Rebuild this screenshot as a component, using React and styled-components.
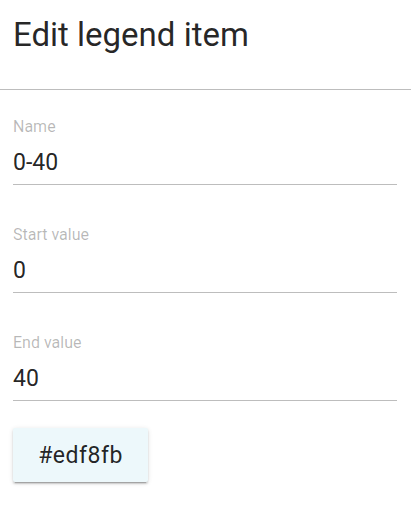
import React from "react";
import styled, { createGlobalStyle } from "styled-components";

const GlobalStyle = createGlobalStyle`
  body {
    margin: 0;
    background: #fff;
    font-family: Roboto, "Liberation Sans", sans-serif;
  }
`;

const Page = styled.div`
  width: 411px;
  height: 505px;
  overflow: hidden;
  background: #fff;
`;

const Header = styled.div`
  padding: 14px 13px 33px;
  border-bottom: 1px solid #bdbdbd;
`;

const Title = styled.h2`
  margin: 0;
  font-size: 33px;
  line-height: 42px;
  font-weight: 400;
  color: rgba(0, 0, 0, 0.85);
`;

const Body = styled.div`
  padding: 29px 14px 0 13px;
  display: flex;
  flex-direction: column;
`;

const Field = styled.div`
  display: flex;
  flex-direction: column;
  margin-bottom: ${(p) => (p.last ? "27px" : "42px")};
`;

const Label = styled.label`
  font-size: 16px;
  line-height: 16px;
  color: rgba(0, 0, 0, 0.28);
`;

const Value = styled.div`
  margin-top: 14px;
  height: 28px;
  padding-bottom: 7px;
  font-size: 23px;
  line-height: 28px;
  color: rgba(0, 0, 0, 0.87);
  border-bottom: 1px solid #bdbdbd;
`;

const ColorButton = styled.button`
  width: 135px;
  height: 54px;
  padding: 0;
  border: none;
  border-radius: 2px;
  background: ${(p) => p.color};
  box-shadow: 0 3px 1px -2px rgba(0, 0, 0, 0.2), 0 2px 2px 0 rgba(0, 0, 0, 0.14),
    0 1px 5px 0 rgba(0, 0, 0, 0.12);
  font-family: Roboto, "Liberation Sans", sans-serif;
  font-size: 23px;
  letter-spacing: 0.5px;
  color: rgba(0, 0, 0, 0.87);
  cursor: pointer;
`;

const fields = [
  { label: "Name", value: "0-40" },
  { label: "Start value", value: "0" },
  { label: "End value", value: "40" },
];

export default function App() {
  return (
    <Page>
      <GlobalStyle />
      <Header>
        <Title>Edit legend item</Title>
      </Header>
      <Body>
        {fields.map((f, i) => (
          <Field key={f.label} last={i === fields.length - 1}>
            <Label>{f.label}</Label>
            <Value>{f.value}</Value>
          </Field>
        ))}
        <div>
          <ColorButton color="#edf8fb">#edf8fb</ColorButton>
        </div>
      </Body>
    </Page>
  );
}
